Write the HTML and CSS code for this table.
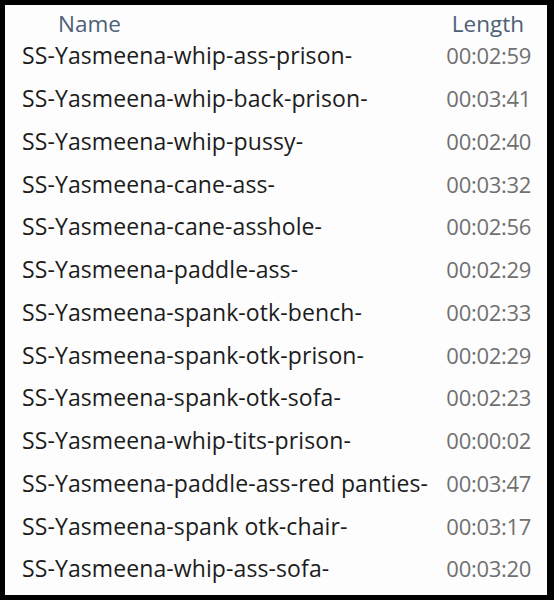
FILE: index.html
```html
<!DOCTYPE html>
<html>
<head>
<meta charset="utf-8">
<link rel="stylesheet" href="styles.css">
</head>
<body>
<div class="frame">
  <div class="header">
    <div class="h-name">Name</div>
    <div class="h-len">Length</div>
  </div>
  <div class="list">
    <div class="row"><span class="name">SS-Yasmeena-whip-ass-prison-</span><span class="len">00:02:59</span></div>
    <div class="row"><span class="name">SS-Yasmeena-whip-back-prison-</span><span class="len">00:03:41</span></div>
    <div class="row"><span class="name">SS-Yasmeena-whip-pussy-</span><span class="len">00:02:40</span></div>
    <div class="row"><span class="name">SS-Yasmeena-cane-ass-</span><span class="len">00:03:32</span></div>
    <div class="row"><span class="name">SS-Yasmeena-cane-asshole-</span><span class="len">00:02:56</span></div>
    <div class="row"><span class="name">SS-Yasmeena-paddle-ass-</span><span class="len">00:02:29</span></div>
    <div class="row"><span class="name">SS-Yasmeena-spank-otk-bench-</span><span class="len">00:02:33</span></div>
    <div class="row"><span class="name">SS-Yasmeena-spank-otk-prison-</span><span class="len">00:02:29</span></div>
    <div class="row"><span class="name">SS-Yasmeena-spank-otk-sofa-</span><span class="len">00:02:23</span></div>
    <div class="row"><span class="name">SS-Yasmeena-whip-tits-prison-</span><span class="len">00:00:02</span></div>
    <div class="row"><span class="name">SS-Yasmeena-paddle-ass-red panties-</span><span class="len">00:03:47</span></div>
    <div class="row"><span class="name">SS-Yasmeena-spank otk-chair-</span><span class="len">00:03:17</span></div>
    <div class="row"><span class="name">SS-Yasmeena-whip-ass-sofa-</span><span class="len">00:03:20</span></div>
  </div>
</div>
</body>
</html>
```
FILE: styles.css
```css
html, body {
  margin: 0;
  padding: 0;
  background: #000;
}
body {
  width: 554px;
  height: 600px;
  font-family: "Open Sans", "Noto Sans", sans-serif;
}
.frame {
  margin: 5px 7px 0 5px;
  height: 590px;
  background: #fdfdfd;
  display: flex;
  flex-direction: column;
}
.header {
  display: flex;
  justify-content: space-between;
  align-items: flex-start;
  box-sizing: border-box;
  height: 29px;
  padding: 8px 23px 0 53px;
  line-height: 21px;
  color: #4d6078;
  font-size: 22.5px;
}
.list {
  display: flex;
  flex-direction: column;
}
.row {
  display: flex;
  justify-content: space-between;
  align-items: center;
  height: 42.75px;
  padding: 0 16px 0 17px;
  line-height: 30px;
}
.name {
  color: #1c1c1c;
  font-size: 23px;
  letter-spacing: 0.1px;
}
.len {
  color: #707070;
  font-size: 22px;
  letter-spacing: -0.3px;
}
```
